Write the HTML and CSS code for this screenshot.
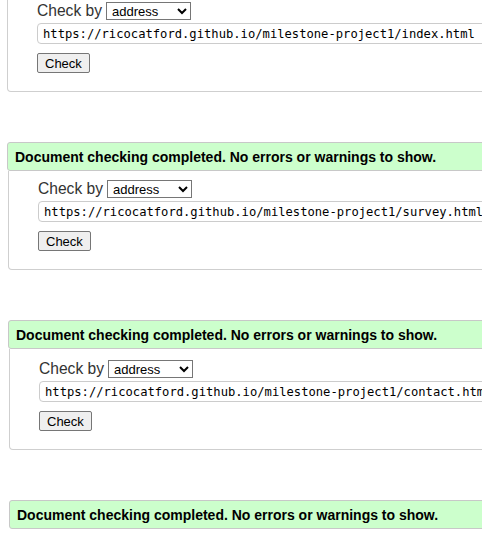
FILE: index.html
```html
<!DOCTYPE html>
<html lang="en">
<head>
<meta charset="utf-8">
<title>Validator results</title>
<link rel="stylesheet" href="styles.css">
</head>
<body>
<div class="page">
  <section class="check check--1">
    <form class="card card--first">
      <div class="by-row"><label class="by-label">Check by</label> <select class="by-select"><option>address</option><option>file upload</option><option>text input</option></select></div>
      <input class="url" type="text" value="https://ricocatford.github.io/milestone-project1/index.html">
      <div class="btn-row"><button class="btn" type="button">Check</button></div>
    </form>
  </section>
  <section class="check check--2">
    <div class="result">Document checking completed. No errors or warnings to show.</div>
    <form class="card">
      <div class="by-row"><label class="by-label">Check by</label> <select class="by-select"><option>address</option><option>file upload</option><option>text input</option></select></div>
      <input class="url" type="text" value="https://ricocatford.github.io/milestone-project1/survey.html">
      <div class="btn-row"><button class="btn" type="button">Check</button></div>
    </form>
  </section>
  <section class="check check--3">
    <div class="result">Document checking completed. No errors or warnings to show.</div>
    <form class="card card--roomy">
      <div class="by-row"><label class="by-label">Check by</label> <select class="by-select"><option>address</option><option>file upload</option><option>text input</option></select></div>
      <input class="url" type="text" value="https://ricocatford.github.io/milestone-project1/contact.html">
      <div class="btn-row"><button class="btn" type="button">Check</button></div>
    </form>
  </section>
  <section class="check check--4">
    <div class="result">Document checking completed. No errors or warnings to show.</div>
  </section>
</div>
</body>
</html>
```

FILE: styles.css
```css
html, body {
  margin: 0;
  padding: 0;
  background: #fff;
  overflow: hidden;
}

body {
  font-family: "Liberation Sans", Arial, sans-serif;
  color: #000;
}

.page {
  display: flex;
  flex-direction: column;
  gap: 50px;
  width: 482px;
}

.check {
  display: flex;
  flex-direction: column;
  margin-right: -60px;
}

.check--1 { margin-left: 6px; }
.check--2 { margin-left: 7px; }
.check--3 { margin-left: 8px; }
.check--4 { margin-left: 9px; }

.result {
  background: #ccffcc;
  border: 1px solid #c8c8c8;
  border-radius: 3px;
  padding: 6px 7px 5px 7px;
  font-weight: bold;
  font-size: 14px;
  line-height: 16px;
  color: #000;
  white-space: nowrap;
}

.card {
  display: flex;
  flex-direction: column;
  margin: 0 0 0 1px;
  padding: 9px 0 18px 29px;
  border: 1px solid #cfcfcf;
  border-top: none;
  border-radius: 0 0 4px 4px;
}

.card--first {
  margin-top: -7px;
}

.card--roomy {
  padding-top: 11px;
}

.by-row {
  display: flex;
  align-items: center;
  height: 18px;
}

.by-label {
  font-size: 15.6px;
  color: #333;
  line-height: 18px;
  margin-right: 4px;
}

.by-select {
  width: 85px;
  height: 18px;
  font-family: "Liberation Sans", Arial, sans-serif;
  font-size: 13px;
  color: #000;
  background: #fff;
  border: 1px solid #767676;
  border-radius: 0;
  padding: 0 0 0 1px;
  margin: 0;
}

.url {
  margin: 3px 0 0 0;
  height: 21px;
  box-sizing: border-box;
  width: 520px;
  padding: 0 5px;
  border: 1px solid #cccccc;
  border-radius: 4px;
  font-family: "DejaVu Sans Mono", "Liberation Mono", monospace;
  font-size: 12.16px;
  color: #000;
  background: #fff;
  outline: none;
}

.btn-row {
  display: flex;
  margin-top: 9px;
}

.btn {
  height: 20px;
  box-sizing: border-box;
  padding: 0 7px;
  margin: 0;
  font-family: "Liberation Sans", Arial, sans-serif;
  font-size: 13px;
  color: #000;
  background: #efefef;
  border: 1px solid #767676;
  border-radius: 2px;
}
```
